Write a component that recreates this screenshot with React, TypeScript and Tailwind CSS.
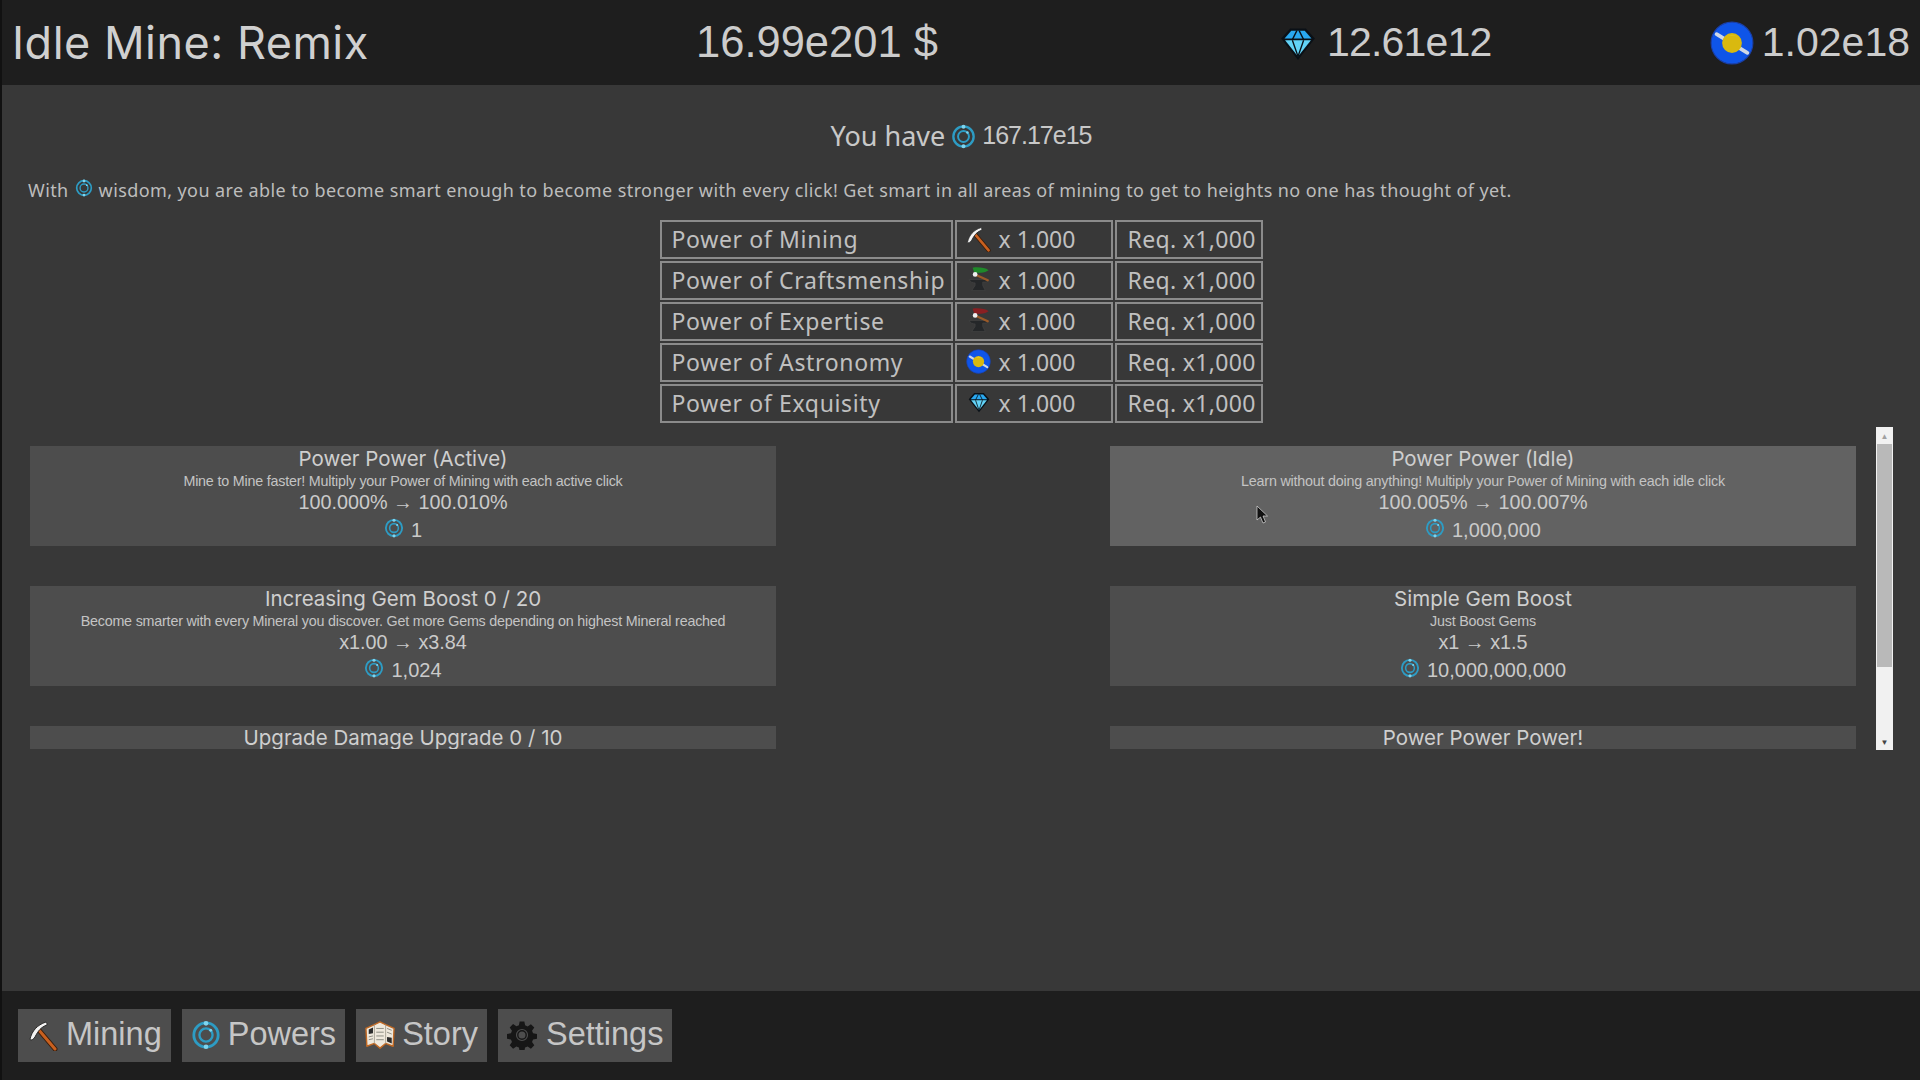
import React from "react";

const Pick = ({ s = 24 }: { s?: number }) => (
  <svg width={s} height={s} viewBox="0 0 32 32" className="inline-block shrink-0">
    <path d="M11 10 L28 30" stroke="#3a1e0c" strokeWidth="5" strokeLinecap="round" />
    <path d="M11 10 L28 30" stroke="#c9601f" strokeWidth="3" strokeLinecap="round" />
    <path d="M3 20 C5 12 10 6 19 3 C20 4 20 5 20 6 C14 8 11 12 8 18 C6 21 3 22 3 20 Z" fill="#f4f4f4" stroke="#2a2a2a" strokeWidth="1" />
  </svg>
);

const Wis = ({ s = 20 }: { s?: number }) => (
  <svg width={s} height={s} viewBox="0 0 32 32" className="inline-block shrink-0">
    <circle cx="16" cy="16" r="13" fill="none" stroke="#2d9cc4" strokeWidth="3" />
    <circle cx="16" cy="16" r="7" fill="none" stroke="#2d9cc4" strokeWidth="2.5" />
    <circle cx="16" cy="3.5" r="2.5" fill="#7fd4ee" />
    <circle cx="16" cy="28.5" r="2.5" fill="#7fd4ee" />
    <circle cx="21" cy="11" r="1.6" fill="#7fd4ee" />
  </svg>
);

const Planet = ({ s = 24 }: { s?: number }) => (
  <svg width={s} height={s} viewBox="0 0 40 40" className="inline-block shrink-0">
    <circle cx="20" cy="20" r="19" fill="#0f55e8" stroke="#1a3fa8" strokeWidth="1" />
    <path d="M6 12 L34 29" stroke="#cfd8e6" strokeWidth="3.4" strokeLinecap="round" />
    <circle cx="20" cy="20" r="9" fill="#d9b90f" />
    <path d="M14 15 A9 9 0 0 1 26 15 A11 11 0 0 0 14 15 Z" fill="#f0de60" />
  </svg>
);

const Gem = ({ s = 24 }: { s?: number }) => (
  <svg width={s} height={s} viewBox="0 0 32 32" className="inline-block shrink-0">
    <path d="M9 3 H23 L31 12 L16 31 L1 12 Z" fill="#0a1016" />
    <path d="M10 5 H22 L28 12 H4 Z" fill="#29a8f0" />
    <path d="M4.5 13.5 H27.5 L16 28 Z" fill="#62d3f7" />
    <path d="M11 13.5 L16 28 L21 13.5 M11 13 L15 5 M21 13 L17 5" fill="none" stroke="#0a1016" strokeWidth="1.2" />
  </svg>
);

const Anvil = ({ c, s = 24 }: { c: string; s?: number }) => (
  <svg width={s} height={s} viewBox="0 0 32 32" className="inline-block shrink-0">
    <path d="M5 16 H26 V19 H21 V23 L24 29 H8 L12 23 V20 C9 20 6 19 5 16 Z" fill="#252729" stroke="#454545" strokeWidth="0.7" />
    <path d="M12 10 L27 17" stroke="#9a5a28" strokeWidth="2.6" strokeLinecap="round" />
    <path d="M9 2 C16 1 24 2 28 5 C24 8 18 8 15 8 L12 11 Z" fill={c} />
    <circle cx="12" cy="10" r="2.8" fill="#f0f0f0" />
  </svg>
);

const StoryMap = ({ s = 30 }: { s?: number }) => (
  <svg width={s} height={s} viewBox="0 0 32 32" className="inline-block shrink-0">
    <path d="M1 9 L10 5 L16 2 L22 5 L31 9 L30 28 L22 25 L16 30 L10 25 L2 28 Z" fill="#efe9dd" stroke="#c26a24" strokeWidth="1.5" strokeLinejoin="round" />
    <path d="M10 5 L10 25 M22 5 L22 25" stroke="#a8a294" strokeWidth="1" />
    <path d="M4 10 L8.5 8 V14 L4 15 Z" fill="#2b2b2b" />
    <path d="M23.5 18 L28.5 19 V25 L23.5 23 Z" fill="#2b2b2b" />
    <path d="M4 18 L8.5 17 M4 21 L8.5 20 M12 9 L20 9 M12 13 L20 13 M12 17 L20 17 M12 21 L20 21 M23.5 9 L28.5 11 M23.5 13 L28.5 15" stroke="#8a8a80" strokeWidth="1" />
  </svg>
);

const Gear = ({ s = 30 }: { s?: number }) => (
  <svg width={s} height={s} viewBox="0 0 32 32" className="inline-block shrink-0">
    <path
      fill="#161616"
      fillRule="evenodd"
      d="M13.5 1.5h5l.8 4.2 2.7 1.1 3.5-2.4 3.6 3.6-2.4 3.5 1.1 2.7 4.2.8v5l-4.2.8-1.1 2.7 2.4 3.5-3.6 3.6-3.5-2.4-2.7 1.1-.8 4.2h-5l-.8-4.2-2.7-1.1-3.5 2.4-3.6-3.6 2.4-3.5-1.1-2.7-4.2-.8v-5l4.2-.8 1.1-2.7-2.4-3.5 3.6-3.6 3.5 2.4 2.7-1.1zM16 9.5a6.5 6.5 0 1 0 0 13 6.5 6.5 0 0 0 0-13z"
    />
    <circle cx="16" cy="16" r="4.5" fill="none" stroke="#161616" strokeWidth="1.5" />
  </svg>
);

const rows: [string, React.ReactNode][] = [
  ["Power of Mining", <Pick s={27} />],
  ["Power of Craftsmenship", <Anvil c="#1f8a2a" s={27} />],
  ["Power of Expertise", <Anvil c="#8a1f22" s={27} />],
  ["Power of Astronomy", <Planet s={25} />],
  ["Power of Exquisity", <Gem s={22} />],
];

const Card = ({
  title,
  desc,
  value,
  cost,
  hover,
}: {
  title: string;
  desc: string;
  value: string;
  cost: string;
  hover?: boolean;
}) => (
  <div className={`flex h-[100px] flex-col items-center ${hover ? "bg-[#626262]" : "bg-[#4d4d4d]"}`}>
    <div className="mt-[1px] h-[24px] font-['Inter'] text-[20.5px] leading-[24px] text-[#cfcfcf]">{title}</div>
    <div className="h-[19px] font-['Liberation_Sans'] text-[14.3px] leading-[20px] tracking-[-0.2px] text-[#c4c4c4]">{desc}</div>
    <div className="h-[25px] font-['Liberation_Sans'] text-[19.8px] leading-[25px] text-[#cacaca]">{value}</div>
    <div className="flex h-[29px] items-center gap-[7px] font-['Liberation_Sans'] text-[20px] text-[#cacaca]">
      <span className="-mt-[3px] flex"><Wis s={20} /></span>
      <span>{cost}</span>
    </div>
  </div>
);

const Partial = ({ title }: { title: string }) => (
  <div className="h-[23px] overflow-hidden bg-[#4d4d4d] text-center font-['Inter'] text-[20.5px] leading-[24px] text-[#cfcfcf]">
    {title}
  </div>
);

const Nav = ({ icon, label, gap }: { icon: React.ReactNode; label: string; gap?: boolean }) => (
  <div className={`flex h-[53px] items-center bg-[#4d4d4d] px-[9px] pb-[2px] font-['Liberation_Sans'] text-[32.5px] text-[#c6c6c6] ${gap ? "gap-[9px]" : "gap-[7px]"}`}>
    {icon}
    <span>{label}</span>
  </div>
);

export default function App() {
  return (
    <div className="relative flex h-screen w-full flex-col overflow-hidden border-l-2 border-[#111111] bg-[#383838]">
      <header className="grid h-[85px] shrink-0 grid-cols-[684px_584px_1fr] items-center bg-[#1e1e1e] pl-[10px] pr-[10px] text-[#cccccc]">
        <div className="font-['Inter'] text-[45px] tracking-[0.5px] text-[#d0d0d0]">Idle Mine: Remix</div>
        <div className="font-['Liberation_Sans'] text-[43.5px]">16.99e201 $</div>
        <div className="flex items-center justify-between font-['Liberation_Sans'] text-[41px]">
          <span className="flex items-center gap-[11px] tracking-[-0.8px]"><Gem s={36} />12.61e12</span>
          <span className="flex items-center gap-[8px]"><Planet s={44} />1.02e18</span>
        </div>
      </header>

      <main className="flex min-h-0 flex-1 flex-col">
        <div className="mt-[36px] flex h-[30px] items-center justify-center gap-[6px] text-[25px] text-[#c8c8c8]">
          <span className="font-['Noto_Sans'] text-[27px]">You have</span>
          <Wis s={25} />
          <span className="font-['Liberation_Sans'] tracking-[-1px]">167.17e15</span>
        </div>
        <p className="mt-[26px] flex items-center pl-[26px] font-['Noto_Sans'] text-[18px] leading-[26px] tracking-[0.4px] text-[#bdbdbd]">
          <span>With</span>
          <span className="mx-[6px] -mt-[4px] flex"><Wis s={18} /></span>
          <span>wisdom, you are able to become smart enough to become stronger with every click! Get smart in all areas of mining to get to heights no one has thought of yet.</span>
        </p>

        <table className="mx-auto mt-[15px] border-separate border-spacing-[2px] font-['Noto_Sans'] text-[23px] text-[#c0c0c0]">
          <tbody>
            {rows.map(([name, icon]) => (
              <tr key={name} className="h-[39px]">
                <td className="w-[293px] border-2 border-[#8b8b8b] pl-[10px] leading-[35px] tracking-[0.65px] whitespace-nowrap">{name}</td>
                <td className="w-[158px] border-2 border-[#8b8b8b] pl-[9px] leading-[35px] whitespace-nowrap">
                  <span className="flex items-center gap-[7px]">
                    <span className="-mt-[3px] flex w-[26px] justify-center">{icon}</span>
                    <span>x 1.000</span>
                  </span>
                </td>
                <td className="w-[148px] border-2 border-[#8b8b8b] pl-[11px] leading-[35px] tracking-[0.35px] whitespace-nowrap">Req. x1,000</td>
              </tr>
            ))}
          </tbody>
        </table>

        <div className="mt-[2px] flex h-[323px] pr-[27px] pl-[28px]">
          <div className="grid min-w-0 flex-1 grid-cols-[746px_746px] justify-between content-start gap-y-[40px] overflow-hidden pt-[19px]">
            <Card title="Power Power (Active)" desc="Mine to Mine faster! Multiply your Power of Mining with each active click" value="100.000% → 100.010%" cost="1" />
            <Card hover title="Power Power (Idle)" desc="Learn without doing anything! Multiply your Power of Mining with each idle click" value="100.005% → 100.007%" cost="1,000,000" />
            <Card title="Increasing Gem Boost 0 / 20" desc="Become smarter with every Mineral you discover. Get more Gems depending on highest Mineral reached" value="x1.00 → x3.84" cost="1,024" />
            <Card title="Simple Gem Boost" desc="Just Boost Gems" value="x1 → x1.5" cost="10,000,000,000" />
            <Partial title="Upgrade Damage Upgrade 0 / 10" />
            <Partial title="Power Power Power!" />
          </div>
          <div className="ml-[20px] flex w-[17px] shrink-0 flex-col items-center bg-[#f1f1f1]">
            <div className="flex h-[17px] w-full items-center justify-center text-[8px] text-[#a0a0a0]">▲</div>
            <div className="h-[223px] w-[15px] bg-[#b9b9b9]" />
            <div className="flex-1" />
            <div className="flex h-[17px] w-full items-center justify-center text-[8px] text-[#444444]">▼</div>
          </div>
        </div>
      </main>

      <footer className="flex h-[89px] shrink-0 items-center gap-[11px] bg-[#1e1e1e] pl-[16px]">
        <Nav icon={<Pick s={32} />} label="Mining" />
        <Nav icon={<Wis s={30} />} label="Powers" />
        <Nav icon={<StoryMap s={30} />} label="Story" />
        <Nav gap icon={<Gear s={30} />} label="Settings" />
      </footer>

      <svg width="14" height="20" viewBox="0 0 14 20" className="absolute left-[1254px] top-[505px]">
        <path d="M1 1 V15 L4.5 12 L7 18 L9.5 17 L7 11 H11.5 Z" fill="#111111" stroke="#dddddd" strokeWidth="0.7" />
      </svg>
    </div>
  );
}
